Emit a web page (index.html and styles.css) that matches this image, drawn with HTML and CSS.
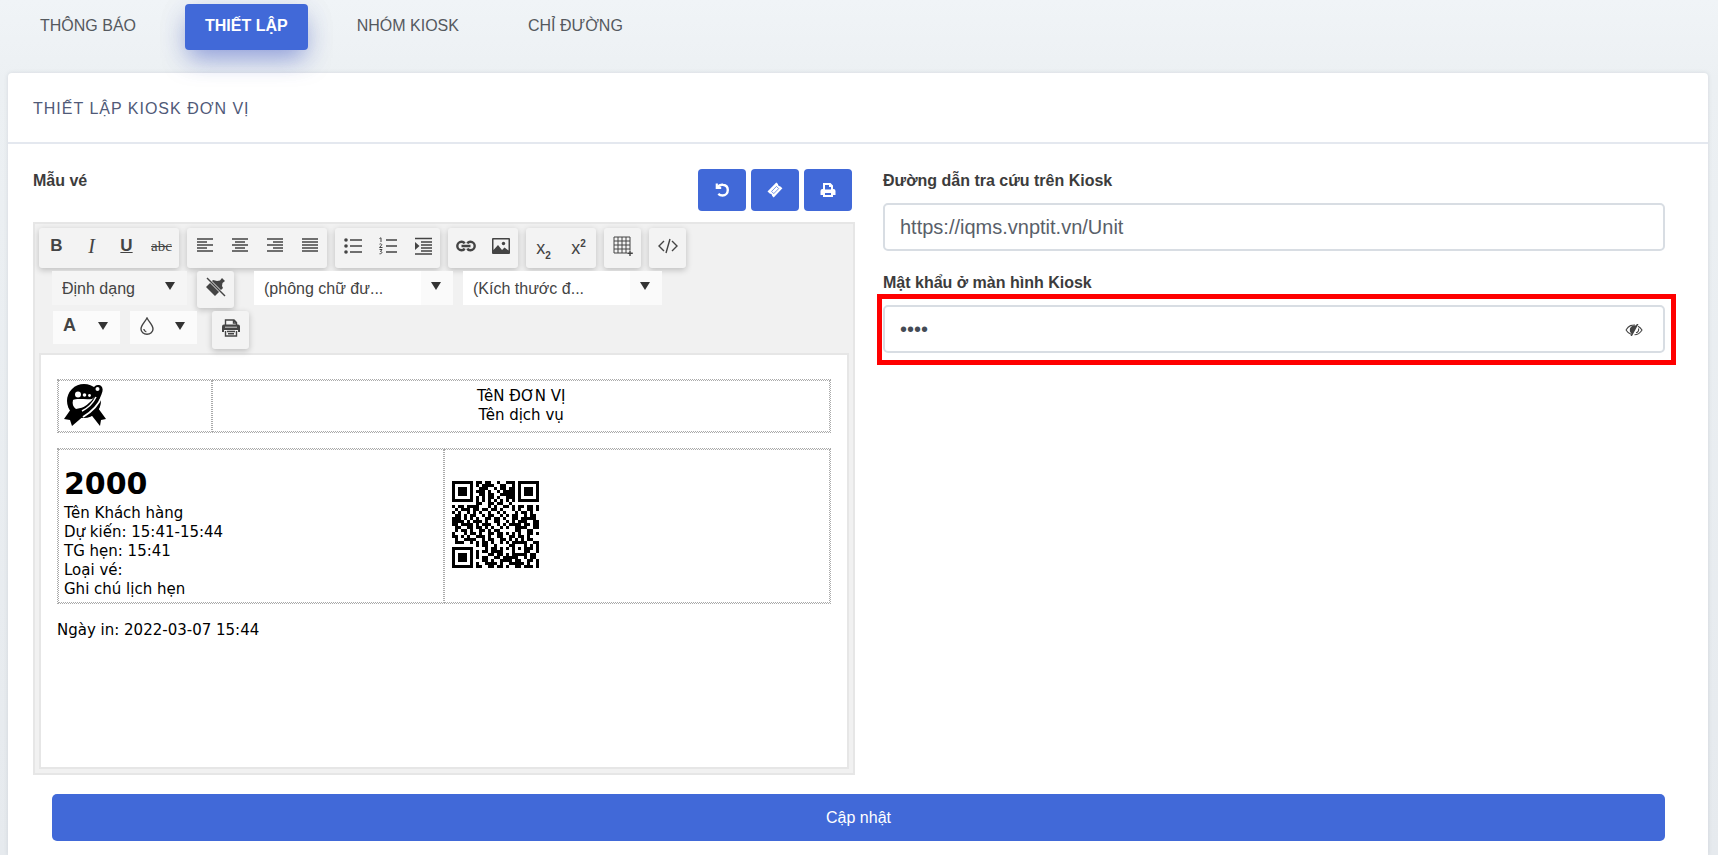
FILE: index.html
```html
<!DOCTYPE html>
<html lang="vi">
<head>
<meta charset="utf-8">
<meta name="viewport" content="width=device-width, initial-scale=1">
<title>Thiết lập Kiosk đơn vị</title>
<link rel="stylesheet" href="styles.css">
</head>
<body>
<nav class="tabs">
  <a class="tab" href="#thong-bao">THÔNG BÁO</a>
  <a class="tab tab-active" href="#thiet-lap">THIẾT LẬP</a>
  <a class="tab" href="#nhom-kiosk">NHÓM KIOSK</a>
  <a class="tab" href="#chi-duong">CHỈ ĐƯỜNG</a>
</nav>
<main class="card">
  <h1 class="card-title">THIẾT LẬP KIOSK ĐƠN VỊ</h1>
  <form class="card-body">
    <div class="columns">
      <section class="template">
        <div class="template-head">
          <h2 class="label">Mẫu vé</h2>
          <div class="actions">
            <button class="action" type="button" aria-label="Hoàn tác"><svg viewBox="0 0 16 16"><path d="M2.8 1.6v4.2h4.4" fill="none" stroke="currentColor" stroke-width="2.2"/><path d="M3.4 5.2C5 3.2 7 2.4 9 2.8c3 .5 4.8 2.6 4.8 5.3 0 3-2.300 5.400-5.300 5.400-1.700 0-3-.500-4.200-1.600" fill="none" stroke="currentColor" stroke-width="2.400"/></svg></button>
            <button class="action" type="button" aria-label="Vé"><svg viewBox="0 0 16 16"><path d="M.5 9.500 9.300.600l1.700 1.500c-.2 1.300.9 2.300 2.100 2.100l2.300 2L6.700 15.400 5 13.800c.3-1.200-.8-2.300-2-2z" fill="currentColor"/><path d="m4.600 9.400 4.900-5 2.200 2.200-4.900 5z" fill="none" stroke="#4169d8" stroke-width=".7"/></svg></button>
            <button class="action" type="button" aria-label="In"><svg viewBox="0 0 16 16"><path fill="currentColor" fill-rule="evenodd" d="M3 1h7.500L13 3.500V7h.5A2 2 0 0 1 15.500 9v4H13v2H3v-2H.5V9a2 2 0 0 1 2-2H3zm2 2v4.500h6V5H9V3zm0 8v2h6v-2z"/></svg></button>
          </div>
        </div>
        <div class="editor">
          <div class="toolbar">
            <div class="tool-row tool-row-main">
              <div class="group">
                <button class="tool tool-bold" type="button">B</button>
                <button class="tool tool-italic" type="button">I</button>
                <button class="tool tool-underline" type="button">U</button>
                <button class="tool tool-strike" type="button">abc</button>
              </div>
              <div class="group">
                <button class="tool" type="button" aria-label="Căn trái"><svg viewBox="0 0 18 18"><path class="line" d="M1 2h16M1 5h10M1 8h16M1 11h10M1 14h16"/></svg></button>
                <button class="tool" type="button" aria-label="Căn giữa"><svg viewBox="0 0 18 18"><path class="line" d="M1 2h16M4 5h10M1 8h16M4 11h10M1 14h16"/></svg></button>
                <button class="tool" type="button" aria-label="Căn phải"><svg viewBox="0 0 18 18"><path class="line" d="M1 2h16M7 5h10M1 8h16M7 11h10M1 14h16"/></svg></button>
                <button class="tool" type="button" aria-label="Căn đều"><svg viewBox="0 0 18 18"><path class="line" d="M1 2h16M1 5h16M1 8h16M1 11h16M1 14h16"/></svg></button>
              </div>
              <div class="group">
                <button class="tool" type="button" aria-label="Danh sách"><svg viewBox="0 0 18 18"><path class="line" d="M6 3h12M6 9h12M6 15h12"/><circle cx="2" cy="3" r="1.800"/><circle cx="2" cy="9" r="1.800"/><circle cx="2" cy="15" r="1.800"/></svg></button>
                <button class="tool" type="button" aria-label="Danh sách số"><svg viewBox="0 0 18 18"><path class="line" d="M7 3h11M7 9h11M7 15h11"/><path class="thin" d="M.5 1.500 2 .8V5M.5 7.200c1-1 2.800 0 2 1L.5 10.500h3M.5 12.500h2.500l-1.500 2c2-.2 2 2.500-1 2.300"/></svg></button>
                <button class="tool" type="button" aria-label="Thụt lề"><svg viewBox="0 0 18 18"><path class="line" d="M1 1.500h17M7 5h11M7 8h11M7 11h11M7 14h11M1 17h17"/><path d="m1 5 4.500 4L1 13z"/></svg></button>
              </div>
              <div class="group">
                <button class="tool" type="button" aria-label="Liên kết"><svg class="icon-wide" viewBox="0 0 20 18"><path fill="none" stroke="currentColor" stroke-width="2.400" d="M8.500 6.500C8 5 7 4.800 5.500 4.800a4.200 4.200 0 0 0 0 8.400c1.500 0 2.500-.2 3-1.700M11.500 6.500c.5-1.500 1.500-1.700 3-1.700a4.200 4.200 0 0 1 0 8.400c-1.500 0-2.500-.2-3-1.700M5.500 9h9"/></svg></button>
                <button class="tool" type="button" aria-label="Hình ảnh"><svg viewBox="0 0 18 18"><path fill-rule="evenodd" d="M1 1h16a1 1 0 0 1 1 1v14a1 1 0 0 1-1 1H1a1 1 0 0 1-1-1V2a1 1 0 0 1 1-1zm.500 1.500V13l4.500-5 4 5 2.500-2.500 4 3v-11z"/><circle cx="11.500" cy="6.500" r="1.700"/></svg></button>
              </div>
              <div class="group">
                <button class="tool tool-script" type="button"><span>x<sub>2</sub></span></button>
                <button class="tool tool-script" type="button"><span>x<sup>2</sup></span></button>
              </div>
              <div class="group">
                <button class="tool tool-single" type="button" aria-label="Bảng"><svg class="icon-wide" viewBox="0 0 20 20"><path class="thin" d="M1 1h16v16H1zM1 5h16M1 9h16M1 13h16M5 1v16M9 1v16M13 1v16"/><path d="M14 14h6v6h-6z" fill="#f3f3f3"/><path class="line" d="M17 14.500V20M14.300 17.200h5.500"/></svg></button>
              </div>
              <div class="group">
                <button class="tool tool-single" type="button" aria-label="Xem HTML"><svg class="icon-wide" viewBox="0 0 20 18"><path class="line" d="M6 4 1 9l5 5M14 4l5 5-5 5M12 2 8 16"/></svg></button>
              </div>
            </div>
            <div class="tool-row tool-row-format">
              <span class="picker picker-format"><select aria-label="Định dạng"><option>Định dạng</option></select><svg class="caret" viewBox="0 0 10 8"><path d="M0 0h10L5 8z"/></svg></span>
              <div class="group group-clean"><button class="tool tool-single" type="button" aria-label="Xóa định dạng"><svg class="icon-wide" viewBox="0 0 20 20"><path d="m11 4 3-.500L16 1l3 3-2.500 2L16 9l1 2-8 8-9-9 7-7z"/><path d="m1 1 18 18" stroke="#f3f3f3" stroke-width="2.600"/><path class="line" d="m1 1 18 18"/></svg></button></div>
              <span class="picker picker-wide"><select aria-label="Phông chữ"><option>(phông chữ đư...</option></select><svg class="caret" viewBox="0 0 10 8"><path d="M0 0h10L5 8z"/></svg></span>
              <span class="picker picker-wide"><select aria-label="Kích thước"><option>(Kích thước đ...</option></select><svg class="caret" viewBox="0 0 10 8"><path d="M0 0h10L5 8z"/></svg></span>
            </div>
            <div class="tool-row tool-row-color">
              <button class="color color-text" type="button"><span>A</span><svg class="caret" viewBox="0 0 10 8"><path d="M0 0h10L5 8z"/></svg></button>
              <button class="color" type="button" aria-label="Màu nền"><svg class="drop" viewBox="0 0 14 18"><path class="line" d="M7 1C5 5 1 8 1 12a6 5.300 0 0 0 12 0C13 8 9 5 7 1zM3.800 12c.2 1.500 1 2.400 2.500 2.700"/></svg><svg class="caret" viewBox="0 0 10 8"><path d="M0 0h10L5 8z"/></svg></button>
              <div class="group group-print"><button class="tool tool-single" type="button" aria-label="In"><svg viewBox="0 0 18 18"><path fill="none" stroke="currentColor" stroke-width="1.400" d="M3.500 6V1h8.500l2.500 2.500V6M11.500 1v3h3M3.500 12v5h11v-5"/><path d="M2 5.500h14a2 2 0 0 1 2 2V13h-2v-2H2v2H0V7.500a2 2 0 0 1 2-2z"/><path class="line" d="M5 12.500h8M6 14.800h6"/><path d="M3 8.200h12" stroke="#f3f3f3" stroke-width=".8"/></svg></button></div>
            </div>
          </div>
          <div class="page">
            <table class="ticket ticket-head">
              <tr>
                <td class="cell-logo"><svg class="logo" viewBox="0 0 42 42" role="img" aria-label="Logo"><path d="M7 25 0 35l6 1 2 6 14-12 3-2 11 14 1-6 5-1-8-11z"/><circle cx="20" cy="17" r="17"/><path d="M9 16c4-2 13 0 19-1l4-3-3 6-8 5-9 2c-3-2-4-5-3-9z" fill="#fff"/><circle cx="14" cy="10.500" r="3" fill="#fff"/><circle cx="20.500" cy="11" r="1.800" fill="#fff"/><circle cx="25.500" cy="11.500" r="1.400" fill="#fff"/><path d="M38 12c-3 8-9 15-19 21" fill="none" stroke="#fff" stroke-width="2"/><path d="M31 6c2-4 6-3 5 1-2 8-10 16-18 20" fill="none" stroke="#000" stroke-width="5"/><path d="M32 13c-3 6-8 11-14 14" fill="none" stroke="#fff" stroke-width="1.500"/><circle cx="33.500" cy="5" r="2" fill="#fff"/></svg></td>
                <td class="cell-unit">TêN ĐƠN VỊ<br>Tên dịch vụ</td>
              </tr>
            </table>
            <table class="ticket ticket-main">
              <tr>
                <td class="cell-info"><strong class="number">2000</strong>Tên Khách hàng<br>Dự kiến: 15:41-15:44<br>TG hẹn: 15:41<br>Loại vé:<br>Ghi chú lịch hẹn</td>
                <td class="cell-code"><svg class="qr" viewBox="0 0 29 29" role="img" aria-label="Mã QR"><path id="qr-modules"/></svg></td>
              </tr>
            </table>
            <p class="printed">Ngày in: 2022-03-07 15:44</p>
          </div>
        </div>
      </section>
      <section class="fields">
        <label class="label" for="url">Đường dẫn tra cứu trên Kiosk</label>
        <input class="input" id="url" type="text" value="https://iqms.vnptit.vn/Unit">
        <label class="label" for="pin">Mật khẩu ở màn hình Kiosk</label>
        <div class="password">
          <input class="input input-pin" id="pin" type="password" value="2000">
          <button class="reveal" type="button" aria-label="Hiện mật khẩu"><svg viewBox="0 0 18 12"><path fill="none" stroke="currentColor" stroke-width="1.100" d="M1 6c3-5 6-5 9-5M1 6c1.200 2 3 3.500 5 4.200M13 2.200c2 1 3 2.300 4 3.800-1.800 3-4.500 4.800-7.500 4.800M13.500 4.500c.6 2-.5 4-2.500 4.300"/><path d="M5 4.500C6 2 8 1.500 10.500 1.500L12 0h1.500L7 12H5.600l.8-2.500C5 8.500 4.500 6.500 5 4.500z"/></svg></button>
        </div>
      </section>
    </div>
    <button class="submit" type="submit">Cập nhật</button>
  </form>
</main>
<script src="script.js"></script>
</body>
</html>
```
FILE: styles.css
```css
* { box-sizing: border-box; }

body {
  margin: 0;
  min-height: 100vh;
  display: flex;
  flex-direction: column;
  background: linear-gradient(#f0f4f7, #ecf0f3 80px, #e6eaee);
  color: #3b3b3b;
  font-family: "Liberation Sans", Arial, sans-serif;
  font-size: 16px;
}

button, input, select { font-family: inherit; }
button { cursor: pointer; }

.tabs {
  display: flex;
  gap: 29px;
  padding: 4px 20px 23px;
}

.tab {
  padding: 12px 20px 14px;
  border-radius: 4px;
  color: #55595e;
  line-height: 20px;
  text-decoration: none;
}

.tab-active {
  position: relative;
  z-index: 1;
  background: #4169d8;
  color: #fff;
  font-weight: bold;
  box-shadow: 0 12px 24px -4px rgba(65, 92, 205, .5), 0 6px 30px rgba(60, 70, 120, .1);
}

.card {
  flex: 1;
  margin: 0 10px 0 8px;
  border-radius: 4px 4px 0 0;
  background: #fff;
  box-shadow: 0 0 4px rgba(70, 80, 100, .15);
}

.card-title {
  margin: 0;
  padding: 25px 25px 23px;
  border-bottom: 2px solid #e4e8ef;
  color: #505a78;
  font-size: 16px;
  font-weight: normal;
  letter-spacing: 1px;
  line-height: 21px;
}

.card-body { padding: 25px 43px 14px 25px; }

.columns {
  display: grid;
  grid-template-columns: 822fr 782fr;
  gap: 28px;
}

.template-head {
  display: flex;
  justify-content: space-between;
  align-items: flex-start;
  padding-right: 3px;
  margin-bottom: 11px;
}

.label {
  display: block;
  margin: 0;
  color: #3c3c3c;
  font-size: 16px;
  font-weight: bold;
  line-height: 24px;
}

.actions { display: flex; gap: 5px; }

.action {
  display: flex;
  align-items: center;
  justify-content: center;
  width: 48px;
  height: 42px;
  padding: 0;
  border: 0;
  border-radius: 4px;
  background: #4169d8;
  color: #fff;
}

.action svg { width: 16px; height: 16px; }

.editor {
  padding: 4px;
  border: 2px solid #e6e6e6;
  background: #f1f1f1;
}

.toolbar {
  display: flex;
  flex-direction: column;
  gap: 3px;
  padding-bottom: 4px;
}

.tool-row { display: flex; align-items: flex-start; }
.tool-row-main { gap: 8px; }
.tool-row-format { gap: 10px; padding-left: 13px; }
.tool-row-color { gap: 10px; padding-left: 14px; }

.group {
  display: flex;
  border-radius: 3px;
  background: #f3f3f3;
  box-shadow: 0 2px 6px rgba(0, 0, 0, .22);
}

.tool {
  display: flex;
  align-items: center;
  justify-content: center;
  width: 35px;
  height: 40px;
  padding: 0 0 5px;
  border: 0;
  background: transparent;
  color: #444;
  font-size: 18px;
  line-height: 20px;
}

.tool-single { width: 37px; }
.tool svg { width: 18px; height: 18px; fill: currentColor; }
.tool .icon-wide { width: 20px; height: 20px; }
.tool-bold { font-weight: bold; font-size: 17px; }
.tool-italic { font-family: "Liberation Serif", serif; font-style: italic; font-size: 20px; }
.tool-underline { font-weight: bold; font-size: 17px; text-decoration: underline; }
.tool-strike { font-family: "Liberation Serif", serif; font-size: 15px; text-decoration: line-through; }
.tool-script { padding: 0; }
.tool-script sub, .tool-script sup { font-size: 10px; font-weight: bold; line-height: 0; }

.line { fill: none; stroke: #444; stroke-width: 1.4; }
.thin { fill: none; stroke: #444; stroke-width: 1; }

.group-clean { margin-right: 10px; }
.group-clean .tool { height: 37px; }
.group-print { margin-left: 5px; }
.group-print .tool { height: 38px; }

.picker { display: grid; align-items: center; }
.picker select, .picker .caret { grid-area: 1 / 1; }
.picker .caret { justify-self: end; margin-right: 12px; margin-bottom: 4px; pointer-events: none; }

.picker select {
  appearance: none;
  height: 34px;
  width: 100%;
  padding: 0 10px;
  border: 0;
  background: #f5f5f5;
  color: #444;
  font-size: 16px;
}

.picker-format { width: 135px; }
.picker-wide { width: 199px; }
.picker-wide select { background: linear-gradient(90deg, #fff 167px, #fafafa 167px); }

.caret { width: 10px; height: 8px; fill: #333; }

.color {
  display: flex;
  align-items: center;
  justify-content: space-between;
  width: 67px;
  height: 33px;
  padding: 0 12px 4px 10px;
  border: 0;
  background: #fbfbfb;
  color: #444;
}

.color-text { font-size: 18px; font-weight: bold; }
.drop { width: 14px; height: 18px; }

.page {
  min-height: 416px;
  padding: 24px 16px;
  border: 2px solid #e6e6e6;
  background: #fff;
  color: #000;
  font-family: "DejaVu Sans", Verdana, sans-serif;
  font-size: 15px;
  line-height: 19px;
}

.ticket {
  width: 100%;
  border: 1px dotted #aaa;
  border-spacing: 0;
  table-layout: fixed;
}

.ticket td { border: 1px dotted #aaa; padding: 5px; }
.ticket-head { height: 54px; margin-bottom: 15px; }
.ticket-main { height: 156px; }
.ticket .cell-logo { width: 20%; padding: 3px 5px 5px; vertical-align: top; }
.cell-unit { text-align: center; }
.ticket .cell-info { width: 50%; padding-bottom: 3px; vertical-align: bottom; }
.ticket .cell-code { padding-bottom: 9px; }
.logo, .qr { display: block; }
.logo { width: 42px; height: 42px; }
.qr { width: 87px; height: 87px; margin-left: 2px; }

.number { display: block; font-size: 30px; line-height: 40px; }
.printed { margin: 17px 0 0; }

.input {
  display: block;
  width: 100%;
  height: 48px;
  padding: 0 15px;
  border: 2px solid #d8dde3;
  border-radius: 5px;
  background: #fff;
  color: #596069;
  font-size: 20px;
}

.fields { display: flex; flex-direction: column; }
.fields .label { margin-bottom: 10px; }
.fields .input + .label { margin-top: 20px; }

.password { position: relative; }

.password::after {
  content: "";
  position: absolute;
  inset: -11px -11px -12px -6px;
  border: 5px solid #f00;
  pointer-events: none;
}

.input-pin { padding-right: 60px; color: #444b55; }

.reveal {
  position: absolute;
  right: 20px;
  top: 15px;
  padding: 4px 2px;
  border: 0;
  background: transparent;
  color: #444;
}

.reveal svg { display: block; width: 18px; height: 12px; fill: currentColor; }

.submit {
  display: block;
  width: calc(100% - 19px);
  height: 47px;
  margin: 19px 0 0 19px;
  border: 0;
  border-radius: 5px;
  background: #4169d8;
  color: #fff;
  font-size: 16px;
}
```
FILE: script.js
```js
// Ticket code, one string per row of modules.
const rows = [
  "#######.##.##..#..###.#######",
  "#.....#.#.####..##..#.#.....#",
  "#.###.#..###..#.##.##.#.###.#",
  "#.###.#.###.#..#.####.#.###.#",
  "#.###.#..##.##..#####.#.###.#",
  "#.....#.#.#.##.#..###.#.....#",
  "#######.#.#.#.#.#.#.#.#######",
  "........##..##.##..#.........",
  "#.##.####...#.#..##.#.##.##.#",
  ".#.###.##.##.##.#...#.#..##.#",
  "#.#..#.#.#..#..#.#...#.##.#..",
  ".##.#.##..#.##..#.#.##..#.##.",
  "###.#.#.#..##.##.#..##.#####.",
  "####.#.###.#..##..#.#.###..##",
  "##.####.#.###..#.#.####.##.##",
  ".##..##.##.#.#..#.#..####..##",
  ".#.##.#..##.#.##.....##..##..",
  "#...#.##.#..##.##.#.#.#..##.#",
  "##.#.#..###.#..##..##.##.#...",
  ".#..####..#.##..##.#.#.#.##..",
  ".###..#.#.##.#..#.#.#####..##",
  "........#.##..#....##...#.#.#",
  "#######....#.##.#.#.#.#.###.#",
  "#.....#.#.##.####...#...##..#",
  "#.###.#.#...##.##.#.#####.##.",
  "#.###.#.#.##..##.#####..#.##.",
  "#.###.#...##.#..####.##..##.#",
  "#.....#.#..####.#..#####.#..#",
  "#######.##..##.##.#..##.###.#"
];
let path = "";
rows.forEach((row, y) => {
  for (const run of row.matchAll(/#+/g)) {
    path += `M${run.index} ${y}h${run[0].length}v1h-${run[0].length}z`;
  }
});
document.getElementById("qr-modules").setAttribute("d", path);
```
